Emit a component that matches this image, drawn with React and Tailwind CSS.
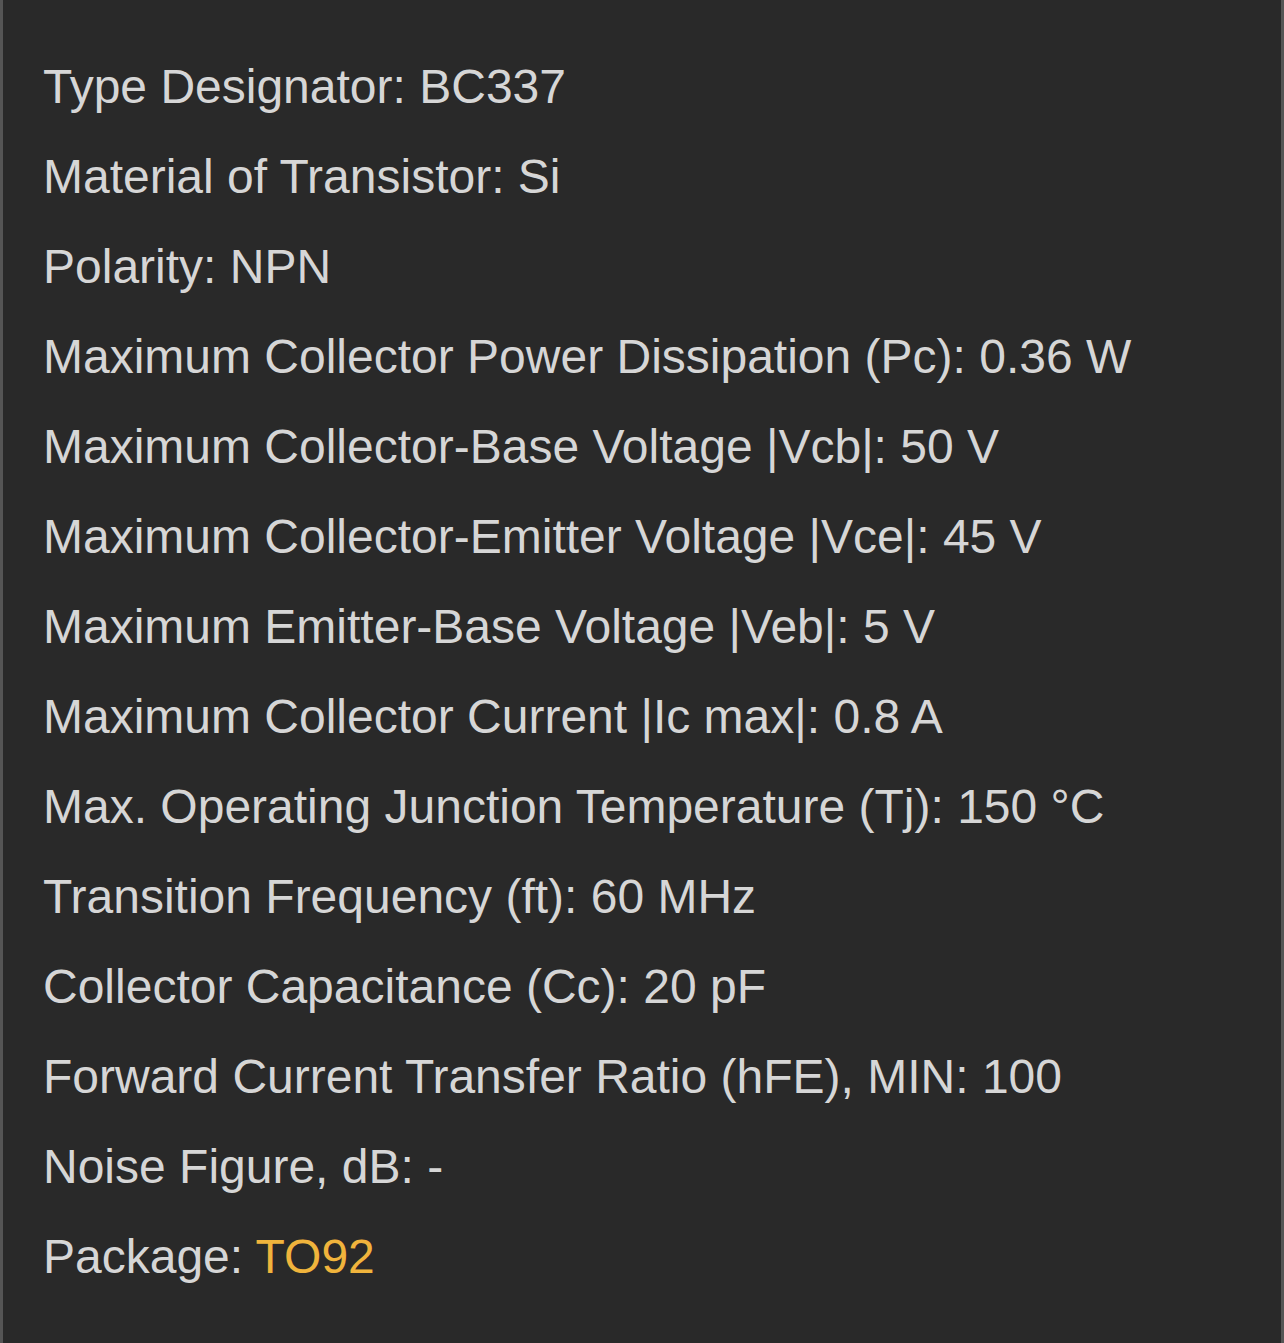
const specs = [
  ["Type Designator", "BC337"],
  ["Material of Transistor", "Si"],
  ["Polarity", "NPN"],
  ["Maximum Collector Power Dissipation (Pc)", "0.36 W"],
  ["Maximum Collector-Base Voltage |Vcb|", "50 V"],
  ["Maximum Collector-Emitter Voltage |Vce|", "45 V"],
  ["Maximum Emitter-Base Voltage |Veb|", "5 V"],
  ["Maximum Collector Current |Ic max|", "0.8 A"],
  ["Max. Operating Junction Temperature (Tj)", "150 °C"],
  ["Transition Frequency (ft)", "60 MHz"],
  ["Collector Capacitance (Cc)", "20 pF"],
  ["Forward Current Transfer Ratio (hFE), MIN", "100"],
  ["Noise Figure, dB", "-"],
];

export default function App() {
  return (
    <div className="min-h-[1343px] w-full bg-[#292929] border-x-[3px] border-[#555555] px-[40px] pt-[42px] font-['Liberation_Sans',Arial,sans-serif] text-[48px] leading-[90px] text-[#d6d6d6]">
      {specs.map(([label, value]) => (
        <p key={label}>
          {label}: {value}
        </p>
      ))}
      <p>
        Package: <span className="text-[#f0b43c]">TO92</span>
      </p>
    </div>
  );
}
